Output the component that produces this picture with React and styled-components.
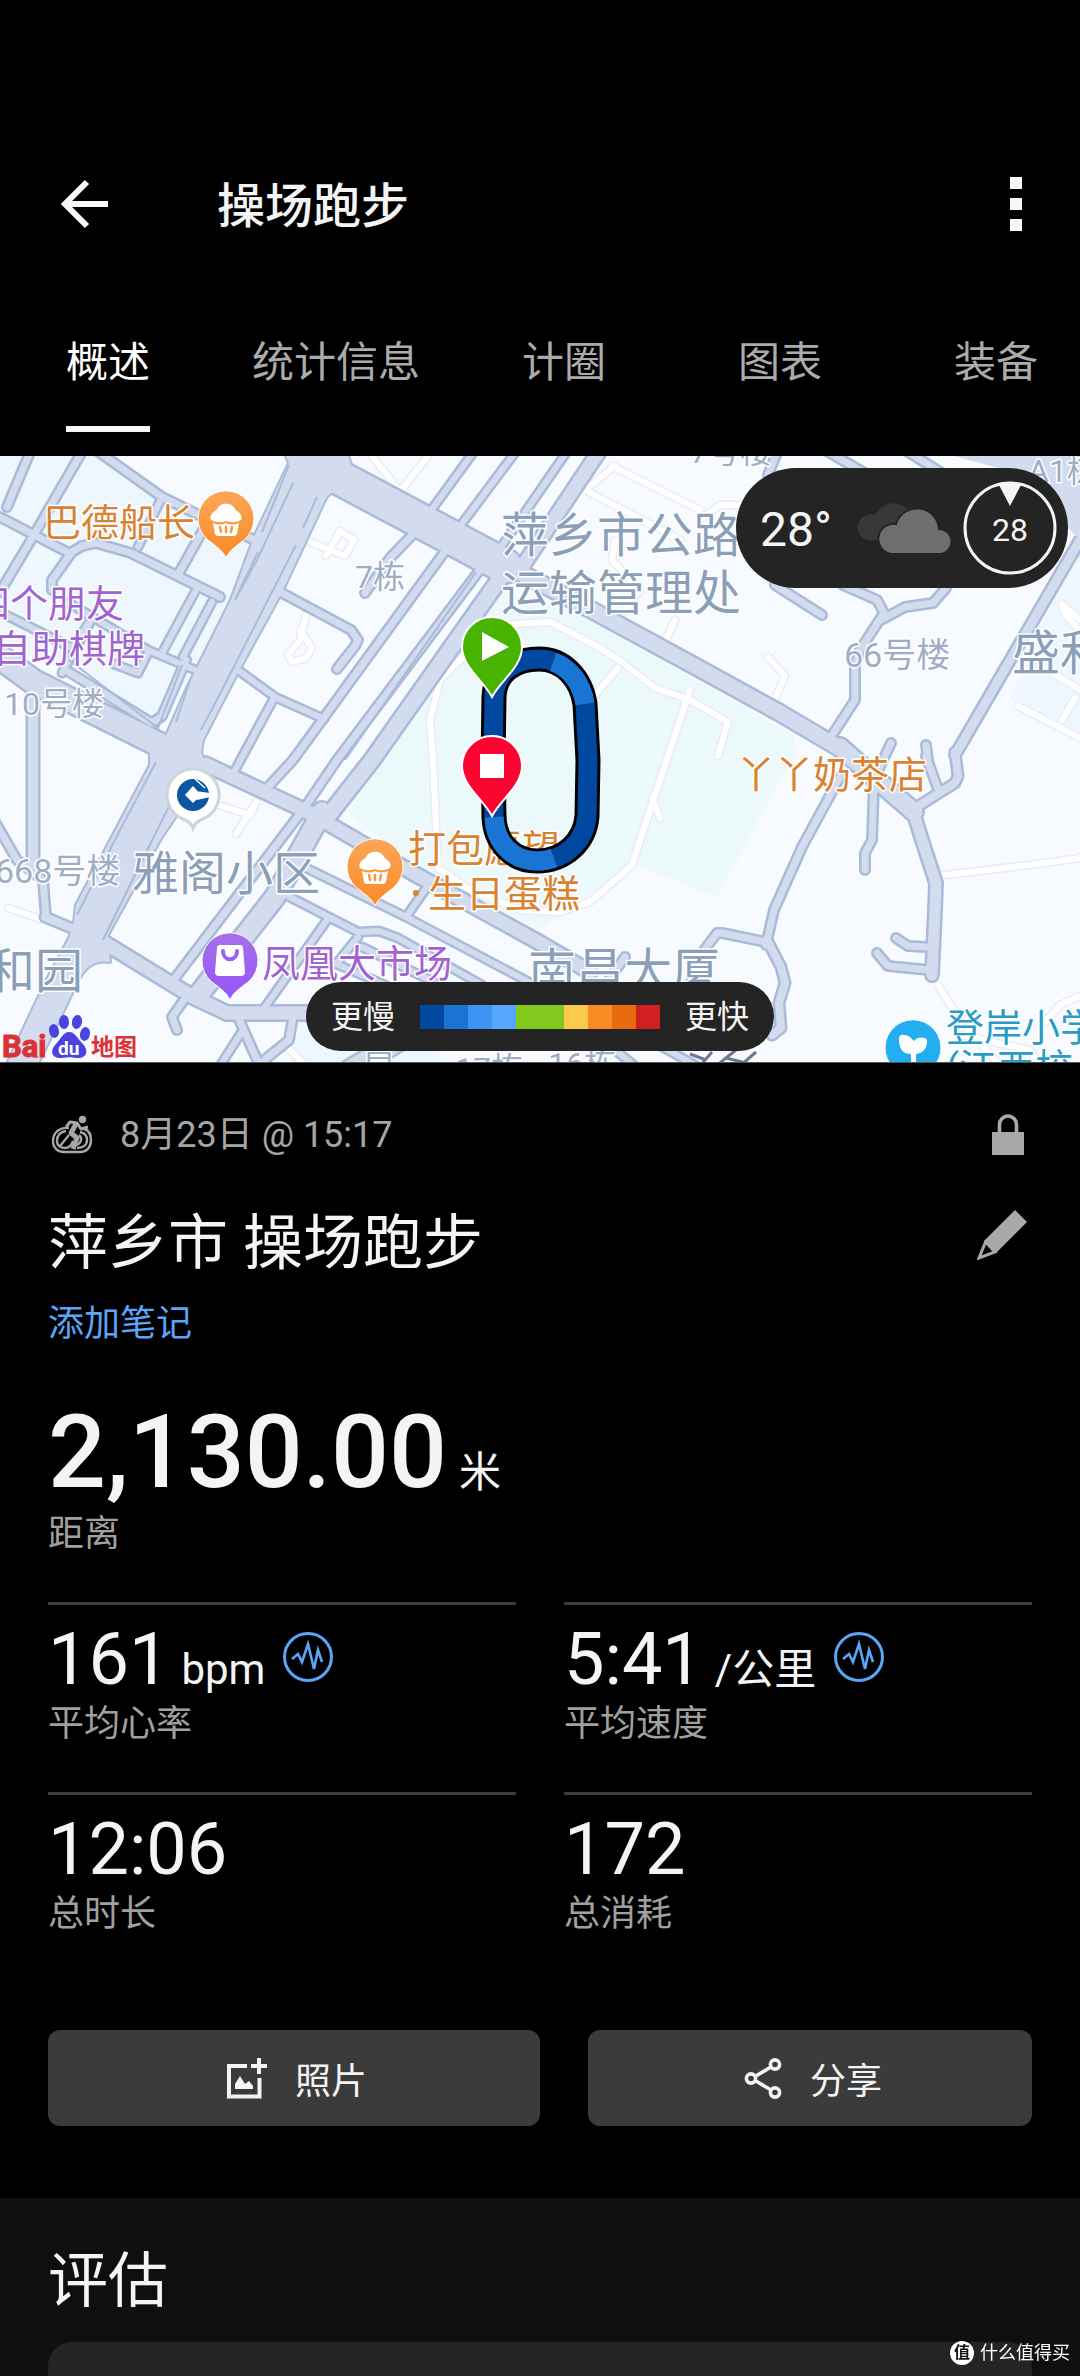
import React from "react";
import styled, { createGlobalStyle } from "styled-components";

const FONT = `Roboto, "Noto Sans CJK SC", sans-serif`;

const GlobalStyle = createGlobalStyle`
  * { box-sizing: border-box; }
  body { margin: 0; background: #000; font-family: ${FONT}; color: #f4f4f4; }
  button { font-family: inherit; border: 0; padding: 0; background: none; color: inherit; cursor: pointer; }
  h1, h2, p, dl, dd, dt { margin: 0; font-weight: 400; }
  svg { display: block; }
`;

const Page = styled.div`
  min-height: 100vh;
  display: flex;
  flex-direction: column;
  overflow: hidden;
`;

/* ---------- header ---------- */

const Toolbar = styled.header`
  display: flex;
  align-items: center;
  padding: 168px 46px 0 48px;
  height: 240px;
`;

const ToolbarTitle = styled.h1`
  flex: 1;
  padding: 6px 0 0 97px;
  font-size: 48px;
  line-height: 72px;
  font-weight: 500;
`;

const IconButton = styled.button`
  flex: none;
  width: ${(p) => p.$size}px;
  height: ${(p) => p.$size}px;
  display: flex;
  align-items: center;
  justify-content: center;
  color: ${(p) => p.$color || "#f8f8f8"};
`;

const Tabs = styled.nav`
  display: flex;
  height: 216px;
  padding: 48px 0 24px;
  overflow: hidden;
`;

const Tab = styled.button`
  flex: none;
  min-width: 216px;
  padding: 0 36px;
  display: flex;
  justify-content: center;
  font-size: 42px;
  line-height: 138px;
  color: ${(p) => (p.$active ? "#fff" : "#ababab")};

  span {
    height: 144px;
    padding-top: 6px;
    border-bottom: 6px solid ${(p) => (p.$active ? "#f8f8f8" : "transparent")};
  }
`;

/* ---------- map ---------- */

const MapPanel = styled.section`
  position: relative;
  width: 100%;
  aspect-ratio: 1080 / 607;
  overflow: hidden;
  background: #f7faff;
`;

const MapCanvas = styled.svg`
  width: 100%;
  height: 100%;
`;

const WeatherPill = styled.div`
  position: absolute;
  top: 12px;
  right: 12px;
  height: 120px;
  padding: 0 11px 0 24px;
  border-radius: 60px;
  background: #242424;
  display: flex;
  align-items: center;
  gap: 25px;
  font-size: 48px;
  line-height: 54px;
`;

const Temperature = styled.span`
  padding-top: 3px;
`;

const Sky = styled.div`
  display: flex;
  align-items: center;
  gap: 12px;
`;

const Legend = styled.div`
  position: absolute;
  bottom: 12px;
  left: 50%;
  transform: translateX(-50%);
  height: 69px;
  padding: 0 25px;
  border-radius: 35px;
  background: #242424;
  display: flex;
  align-items: center;
  gap: 25px;
  font-size: 32px;
  line-height: 48px;
  white-space: nowrap;
`;

const Scale = styled.div`
  display: flex;
`;

const Swatch = styled.i`
  width: 24px;
  height: 24px;
  background: ${(p) => p.$color};
`;

/* ---------- details ---------- */

const Details = styled.main`
  padding: 48px 48px 72px;
`;

const Row = styled.div`
  display: flex;
  align-items: ${(p) => p.$align || "center"};
  justify-content: space-between;
  margin-bottom: ${(p) => p.$after || 0}px;
`;

const DateLine = styled.p`
  display: flex;
  align-items: center;
  gap: 24px;
  font-size: 36px;
  line-height: 48px;
  color: #a6a6a6;
`;

const ActivityName = styled.h2`
  padding-top: 3px;
  font-size: 60px;
  line-height: 72px;
`;

const NoteLink = styled.a`
  display: block;
  width: max-content;
  margin-top: 20px;
  font-size: 36px;
  line-height: 48px;
  color: #5ba5f6;
  text-decoration: none;
`;

const Distance = styled.dl`
  display: flex;
  flex-direction: column-reverse;
  margin: 46px 0 44px;
`;

const Label = styled.dt`
  font-size: 36px;
  line-height: 48px;
  color: #a0a0a0;
`;

const Figure = styled.dd`
  display: flex;
  align-items: baseline;
  gap: 12px;
  font-size: ${(p) => (p.$large ? 102 : 72)}px;
  font-weight: ${(p) => (p.$large ? 500 : 400)};
  line-height: ${(p) => (p.$large ? 116 : 80)}px;
  height: ${(p) => (p.$large ? 116 : 80)}px;

  svg {
    align-self: flex-start;
    margin: 12px 0 0 6px;
  }
`;

const Unit = styled.span`
  font-size: 42px;
  font-weight: 400;
  line-height: 48px;
`;

const Stats = styled.dl`
  display: grid;
  grid-template-columns: 1fr 1fr;
  column-gap: 48px;
  row-gap: 44px;
`;

const Stat = styled.div`
  display: flex;
  flex-direction: column-reverse;
  padding-top: 15px;
  border-top: 3px solid #3d3d3d;
`;

const Actions = styled.div`
  display: grid;
  grid-template-columns: 41fr 37fr;
  gap: 48px;
  margin-top: 92px;
`;

const ActionButton = styled.button`
  height: 96px;
  padding-left: 6px;
  border-radius: 12px;
  background: #3b3b3b;
  display: flex;
  align-items: center;
  justify-content: center;
  gap: 28px;
  font-size: 36px;
`;

const Review = styled.section`
  flex: 1;
  display: flex;
  flex-direction: column;
  padding: 48px 48px 0;
  background: #0f0f0f;
`;

const ReviewTitle = styled.h2`
  font-size: 60px;
  line-height: 72px;
  margin-bottom: 24px;
`;

const ReviewCard = styled.div`
  flex: 1;
  min-height: 34px;
  border-radius: 24px 24px 0 0;
  background: #242424;
`;

const Watermark = styled.div`
  position: fixed;
  right: 10px;
  bottom: 11px;
  display: flex;
  align-items: center;
  gap: 6px;
  font-size: 18px;
  line-height: 24px;
  color: #fff;
`;

const WatermarkBadge = styled.span`
  width: 24px;
  height: 24px;
  border-radius: 50%;
  background: #fff;
  color: #111;
  font-size: 16px;
  font-weight: 700;
  text-align: center;
`;

/* ---------- map data ---------- */

// Each road: [width of the casing, points]
const ROADS = [
  [12, "31,450 7,507"],
  [12, "83,450 31,540 0,592"],
  [12, "96,450 162,497 203,517 257,541"],
  [11, "162,497 138,547"],
  [12, "0,517 69,553"],
  [12, "52,590 52,580 72,552 82,546 96,543 131,553 220,597"],
  [12, "207,523 179,573"],
  [11, "196,590 162,653"],
  [11, "212,602 183,657"],
  [11, "69,603 148,650 200,672"],
  [11, "0,612 72,648 93,617"],
  [11, "93,617 62,673"],
  [11, "148,653 138,673 114,664"],
  [12, "69,672 152,723 162,716 186,660"],
  [28, "-10,650 34,682 160,745"],
  [15, "33,690 33,865"],
  [12, "-6,820 17,860 43,880 46,917"],
  [13, "45,917 76,930"],
  [38, "325,470 400,510 505,566"],
  [20, "500,562 588,608 691,664 780,713 846,752"],
  [22, "840,747 876,779 914,812"],
  [16, "912,808 922,840 936,883 935,910 932,975"],
  [11, "475,450 430,512"],
  [11, "517,450 461,525"],
  [11, "568,450 499,550"],
  [18, "600,450 520,570"],
  [12, "417,530 390,558 365,593"],
  [12, "448,547 293,760 268,787"],
  [12, "482,567 337,760 303,810 172,982"],
  [20, "499,580 372,760 325,820"],
  [24, "322,812 275,897 200,993"],
  [12, "282,593 351,630 358,640 355,646 337,669"],
  [11, "238,670 275,697 324,719"],
  [11, "273,700 234,772"],
  [18, "205,764 310,813 413,873 540,943 590,972"],
  [11, "282,893 358,932 379,931 398,938 482,985"],
  [11, "296,863 406,917 540,988"],
  [11, "427,887 406,917"],
  [11, "327,920 265,1007"],
  [11, "358,937 337,963"],
  [11, "362,947 440,985"],
  [11, "334,963 385,985"],
  [18, "100,940 193,997 227,1013 320,1013"],
  [12, "186,997 172,1017 177,1030"],
  [12, "238,1017 258,1062"],
  [12, "293,1017 289,1040 262,1062"],
  [11, "241,1033 220,1066"],
  [12, "840,777 802,847 774,910 766,945"],
  [12, "688,990 702,953 717,933 722,933 766,942"],
  [13, "767,940 781,967 785,983 779,1003 781,1028 772,1035"],
  [12, "874,783 872,840 865,853 865,870"],
  [13, "912,810 939,793 955,783 958,776 955,752"],
  [14, "1080,540 955,755"],
  [12, "926,756 939,792"],
  [12, "926,745 928,760"],
  [12, "891,743 876,775"],
  [12, "896,938 908,946 926,947"],
  [12, "877,953 888,966 929,970"],
  [12, "778,450 768,475"],
  [12, "825,450 868,475"],
  [12, "905,450 945,475"],
  [12, "775,585 822,615"],
  [12, "843,585 877,600 884,613 860,650 855,666 855,700 829,740"],
  [12, "946,588 933,603 905,607 881,620"],
  [12, "625,957 610,978"],
  [24, "400,1040 350,1070"],
  [11, "590,1030 640,1070"],
  [11, "650,1040 700,1068"],
];

const LANES = [
  "293,483 257,560 235,600",
  "317,497 303,528",
  "289,465 262,532",
  "258,552 235,600",
  "296,545 222,690 201,730",
  "190,680 176,722",
  "156,762 120,830 77,915",
  "172,800 103,940",
  "69,660 158,728 182,665",
  "476,572 345,760",
];

// Footpaths drawn as white lines
const PATHS = [
  "372,456 400,492 428,456",
  "305,540 345,556 354,540 340,531 326,556",
  "306,615 300,640 288,655 292,662 306,658 312,648 300,630",
  "218,805 250,815 256,802 236,834",
  "433,760 430,720 440,680 465,655 500,625 550,622 595,645 622,662 655,688 690,700 728,722 718,756",
  "433,760 438,868 470,890 520,910 560,912 590,902 632,865 650,810 690,690",
  "652,798 660,818",
  "585,490 680,540",
  "612,466 700,510",
  "615,466 585,490",
  "615,540 612,560 640,590 618,620",
  "675,620 662,648",
  "618,668 595,695",
  "768,657 785,676 770,710",
  "700,520 720,505 740,505",
  "936,876 1030,865 1080,858",
  "938,985 960,1020 1000,1066",
  "1080,996 1060,1005 1045,1022",
  "1080,620 1062,604 1064,612 1080,632",
  "1018,706 1080,738",
  "8,908 40,919",
  "290,1050 310,1070",
  "960,1035 1030,1050 1040,1066",
  "1080,690 1040,665",
  "1062,720 1075,698",
];

const COLOR = { food: "#d9822f", shop: "#a064d0", area: "#8b9fb8", plain: "#9fadc6", school: "#2a9bc4" };

// [kind, size, x, baseline, text]
const LABELS = [
  ["plain", 32, 690, 463, "7号楼"],
  ["plain", 32, 1028, 482, "A1栋"],
  ["food", 38, 43, 536, "巴德船长"],
  ["plain", 32, 355, 588, "7栋"],
  ["shop", 38, -28, 617, "四个朋友"],
  ["shop", 38, -7, 662, "自助棋牌"],
  ["plain", 32, 4, 715, "10号楼"],
  ["plain", 34, -5, 883, "668号楼"],
  ["plain", 34, 844, 667, "66号楼"],
  ["area", 48, 501, 552, "萍乡市公路"],
  ["area", 48, 501, 610, "运输管理处"],
  ["area", 48, 1012, 670, "盛和"],
  ["food", 38, 737, 788, "丫丫奶茶店"],
  ["area", 47, 132, 890, "雅阁小区"],
  ["food", 38, 408, 862, "打包愿望"],
  ["food", 38, 428, 907, "生日蛋糕"],
  ["shop", 38, 262, 977, "凤凰大市场"],
  ["area", 48, -13, 988, "和园"],
  ["area", 48, 528, 988, "南昌大厦"],
  ["plain", 30, 364, 1062, "昌"],
  ["plain", 32, 455, 1080, "17栋"],
  ["plain", 32, 548, 1075, "16栋"],
  ["school", 38, 946, 1041, "登岸小学"],
  ["school", 38, 946, 1081, "(江西校"],
];

const SCALE_COLORS = ["#0048a0", "#1a74d4", "#3d94f4", "#58a8ff", "#82c91e", "#82c91e", "#fbca4d", "#fb8b24", "#e96b0f", "#d02022"];

const AVENUE =
  "M286,456 L289,463 L255,535 L231,600 L186,690 L165,738 L150,750 L150,765 L76,905 L74,922 L69,938 L45,983 L5,1068 L36,1068 L77,983 Q88,958 110,962 L108,935 L160,840 L207,770 L201,752 L203,740 L238,672 L282,592 L325,500 Q332,488 342,490 L352,468 L348,456 Z";

const TRACK =
  "M494,697 L493,760 L494,817 C495,842 512,861 537,861 C564,861 585,842 587,816 L588,760 L585,704 C581,678 563,659 539,659 C517,659 495,670 494,697 Z";

function Bubble({ x, y, fill, children }) {
  return (
    <g transform={`translate(${x} ${y})`}>
      <path
        d="M0,39 C-3,32 -8,29 -14,24 A28,28 0 1 1 14,24 C8,29 3,32 0,39 Z"
        fill={fill}
        stroke="#fff"
        strokeWidth="1"
      />
      {children}
    </g>
  );
}

function Cupcake() {
  return (
    <g fill="#fff">
      <path d="M-15,1 C-18,-5 -10,-8 -9,-10 C-6,-17 6,-17 9,-10 C10,-8 18,-5 15,1 Q8,5 0,2 Q-8,5 -15,1 Z" />
      <path d="M-13,4 Q-6,7 0,4 Q6,7 13,4 L11,15 Q10,17 8,17 L-8,17 Q-10,17 -11,15 Z" />
      <path d="M-6,8 L-5,13 M0,8 L0,13 M6,8 L5,13" stroke="#fb963c" strokeWidth="2.4" strokeLinecap="round" />
    </g>
  );
}

function RoutePin({ x, y, fill, children }) {
  return (
    <g transform={`translate(${x} ${y})`}>
      <path
        d="M0,50 C-8,34 -30,20 -30,0 A30,30 0 0 1 30,0 C30,20 8,34 0,50 Z"
        fill={fill}
        stroke="#fff"
        strokeWidth="2"
      />
      {children}
    </g>
  );
}

function RouteMap() {
  return (
    <MapCanvas viewBox="0 456 1080 607" preserveAspectRatio="xMidYMid slice" role="img" aria-label="路线地图">
      <rect x="0" y="456" width="1080" height="607" fill="#f7faff" />
      <path d="M0,456 L100,456 L255,540 L215,640 L160,720 L0,640 Z" fill="#eef6fe" />
      <path d="M1080,540 L1010,700 L1080,740 Z" fill="#eef6fe" />
      <path d="M300,1020 L440,1040 L440,1066 L290,1066 Z" fill="#edf7fd" />
      <path d="M500,592 L574,612 L793,735 L797,750 L717,897 L636,865 L575,907 L540,930 L427,873 L348,813 L382,760 Z" fill="#ecf9fb" />

      <g fill="none" strokeLinejoin="round" strokeLinecap="round">
        {PATHS.map((d) => <polyline key={d} points={d} stroke="#e9edf1" strokeWidth="9" />)}
        {PATHS.map((d) => <polyline key={d} points={d} stroke="#fff" strokeWidth="6" />)}
        {ROADS.map(([w, d]) => <polyline key={d} points={d} stroke="#a9bbd8" strokeWidth={w} />)}
        <path d={AVENUE} stroke="#a9bbd8" strokeWidth="4" />
        <path d="M955,456 L1080,456 L1080,540 L1060,520 L1040,480 Z" fill="#d2dcee" />
        {ROADS.map(([w, d]) => <polyline key={d} points={d} stroke="#d2dcee" strokeWidth={w - 5} />)}
      </g>
      <path d={AVENUE} fill="#d2dcee" />
      <g fill="none" stroke="#a9bbd8" strokeWidth="2">
        {LANES.map((d) => <polyline key={d} points={d} />)}
      </g>

      <g fontFamily={FONT} stroke="#fff" strokeWidth="3" strokeLinejoin="round" paintOrder="stroke">
        {LABELS.map(([kind, size, x, y, text]) => (
          <text key={text} x={x} y={y} fontSize={size} fill={COLOR[kind]}>
            {text}
          </text>
        ))}
      </g>
      <circle cx="416" cy="893" r="3" fill={COLOR.food} />
      <path d="M690,1054 L706,1060 M700,1066 L712,1052 M716,1066 L736,1050 M740,1066 L756,1052 M726,1058 L750,1064" stroke="#6f7890" strokeWidth="3" />

      <defs>
        <linearGradient id="food" x1="0" y1="0" x2="0" y2="1">
          <stop offset="0" stopColor="#fba658" />
          <stop offset="1" stopColor="#fb8a26" />
        </linearGradient>
        <linearGradient id="shop" x1="0" y1="0" x2="0" y2="1">
          <stop offset="0" stopColor="#a671ea" />
          <stop offset="1" stopColor="#9555fa" />
        </linearGradient>
      </defs>
      <Bubble x={226} y={519} fill="url(#food)"><Cupcake /></Bubble>
      <Bubble x={375} y={867} fill="url(#food)"><Cupcake /></Bubble>
      <Bubble x={230} y={961} fill="url(#shop)">
        <path d="M-10,-16 L10,-16 Q13,-16 13,-13 L15,11 Q15,15 11,15 L-11,15 Q-15,15 -15,11 L-13,-13 Q-13,-16 -10,-16 Z" fill="#fff" />
        <path d="M-7,-10 C-7,1 7,1 7,-10" fill="none" stroke="#9c60f2" strokeWidth="4" strokeLinecap="round" />
      </Bubble>
      <Bubble x={913} y={1048} fill="#23aef0">
        <path d="M-2,22 L-2,6 C-9,6 -14,2 -14,-9 Q-14,-14 -9,-13 C-4,-13 -1,-9 1,-7 C4,-11 8,-11 12,-10 Q15,-9 14,-5 C13,2 9,5 3,6 L3,22 Z" fill="#fff" />
      </Bubble>
      <g transform="translate(193 795)">
        <path d="M0,33 Q-2,27 -10,24 A26,26 0 1 1 10,24 Q2,27 0,33 Z" fill="#fff" stroke="#cfd4dc" strokeWidth="3" />
        <circle r="16" fill="#0b57a6" />
        <path d="M0,-9 L8,0 L0,8 L-8,0 Z M2,-4 L17,-2 L17,2 L4,5 Z" fill="#fff" />
        <path d="M2,-16 L12,-7" stroke="#fff" strokeWidth="1.4" />
      </g>

      <g fill="none" strokeLinejoin="round">
        <path d={TRACK} stroke="#000" strokeWidth="25" />
        <path d={TRACK} stroke="#0048a0" strokeWidth="19" />
        <path d="M553,662 C570,668 582,683 585,704" stroke="#1a74d4" strokeWidth="19" />
        <path d="M494,817 C495,842 512,861 537,861 Q546,861 554,858" stroke="#1a74d4" strokeWidth="19" />
      </g>
      <RoutePin x={492} y={766} fill="#fc0430">
        <rect x="-12" y="-12" width="24" height="24" fill="#fff" />
      </RoutePin>
      <RoutePin x={492} y={647} fill="#48b300">
        <path d="M-10,-15 L17,0 L-10,14 Z" fill="#fff" />
      </RoutePin>

      <g transform="translate(0 1000)" fontFamily={FONT} fontWeight="700">
        <text x="2" y="57" fontSize="31" fill="#dc3236" stroke="#dc3236" strokeWidth="1">Bai</text>
        <g fill="#4a43e0">
          <ellipse cx="54" cy="31" rx="5" ry="7" transform="rotate(-12 54 31)" />
          <ellipse cx="64" cy="22" rx="5" ry="7" />
          <ellipse cx="77" cy="22" rx="5" ry="7" transform="rotate(10 77 22)" />
          <ellipse cx="85" cy="34" rx="5" ry="7" transform="rotate(12 85 34)" />
          <path d="M69,32 C75,32 77,38 82,43 C90,51 86,59 77,58 C71,57 67,57 62,58 C52,59 49,51 56,44 C61,39 63,32 69,32 Z" />
        </g>
        <text x="58" y="55" fontSize="19" fill="#fff">du</text>
        <text x="91" y="55" fontSize="23" fill="#dc3236">地图</text>
      </g>
      <rect x="0" y="1062" width="1080" height="1" fill="#555" />
    </MapCanvas>
  );
}

/* ---------- icons ---------- */

const BackIcon = () => (
  <svg width="48" height="50" viewBox="0 0 48 50" fill="none" stroke="currentColor" strokeWidth="6">
    <path d="M27,3 L5,25 L27,47 M4,25 L48,25" />
  </svg>
);

const MoreIcon = () => (
  <svg width="12" height="54" fill="currentColor">
    <rect width="12" height="12" />
    <rect y="21" width="12" height="12" />
    <rect y="42" width="12" height="12" />
  </svg>
);

const CyclistIcon = () => (
  <svg width="48" height="40" viewBox="-4 0 48 40" fill="none" stroke="currentColor" strokeWidth="2.4" strokeLinejoin="round">
    <circle cx="30.500" cy="4.500" r="3.700" fill="currentColor" stroke="none" />
    <path d="M17,13 C7,12 1,18 1,26 C1,33 6,37 12,37 L28,37 C35,37 39,32 39,25 C39,19 36,15 32,14" />
    <path d="M14,16 C8,17 5,21 5,26 C5,31 9,33 13,33 C18,33 20,29 21,26 M8,31 L17,20 M28,17 C33,18 35,21 35,25 C35,30 31,33 25,33 M24,30 C29,29 31,23 27,20" />
    <path d="M14,12 L18,7 L25,8 L29,14 L36,12" strokeWidth="3" />
    <path d="M24,9 L19,18 L25,23 L21,34" strokeWidth="5" />
  </svg>
);

const LockIcon = () => (
  <svg width="32" height="42" viewBox="0 0 32 42">
    <path d="M7.500,19 V10.500 a8.500,8.500 0 0 1 17,0 V19" fill="none" stroke="currentColor" strokeWidth="3.600" />
    <rect y="18" width="32" height="23" fill="currentColor" />
  </svg>
);

const PencilIcon = () => (
  <svg width="50" height="50" viewBox="0 0 50 50">
    <path d="M38,0 L50,12 L19,43 L7,31 Z" fill="currentColor" />
    <path d="M8.500,32 L2,48 L18,42 Z" fill="none" stroke="currentColor" strokeWidth="3" />
  </svg>
);

const PulseIcon = () => (
  <svg width="50" height="50" viewBox="0 0 50 50" fill="none" stroke="#5ba5f6" strokeWidth="3" aria-hidden="true">
    <circle cx="25" cy="25" r="23.500" />
    <path d="M9,27 L15,22 L19,30 L25,12 L31,37 L35,18 L39,30" strokeWidth="2.600" />
  </svg>
);

const PhotoIcon = () => (
  <svg width="40" height="41" viewBox="0 0 40 41" fill="none" stroke="currentColor" strokeWidth="4">
    <path d="M20,8 H2 V38.500 H32.500 V20" />
    <path d="M32,0 V16 M24,8 H40" />
    <path d="M8,31 V26 L13,18 L18,26 L22,23 L26,28 V31 Z" fill="currentColor" stroke="none" />
  </svg>
);

const ShareIcon = () => (
  <svg width="38" height="41" viewBox="0 0 38 41" fill="none" stroke="currentColor" strokeWidth="3.600">
    <circle cx="31" cy="6.500" r="4.600" />
    <circle cx="31" cy="34.500" r="4.600" />
    <circle cx="7" cy="20.500" r="4.600" />
    <path d="M11,18.500 L27,9 M11,22.500 L27,32" />
  </svg>
);

const CloudIcon = () => (
  <svg width="94" height="54" viewBox="0 0 94 54">
    <path d="M16,39 A13,13 0 1 1 18,14 A20,20 0 0 1 52,10 L40,39 Z" fill="#383838" />
    <path
      d="M34,53 A15,15 0 1 1 39,23 A22,22 0 0 1 82,28 A12.500,12.500 0 0 1 82,53 Z"
      fill="#6e6e6e"
      stroke="#242424"
      strokeWidth="2"
    />
  </svg>
);

const CompassIcon = () => (
  <svg width="94" height="94" viewBox="0 0 94 94">
    <circle cx="47" cy="47" r="45" fill="none" stroke="#f4f4f4" strokeWidth="3" />
    <path d="M36,4 Q47,0 58,4 L47,25 Z" fill="#f4f4f4" />
    <text x="47" y="60" textAnchor="middle" fontFamily={FONT} fontSize="32" fill="#f4f4f4">28</text>
  </svg>
);

/* ---------- page ---------- */

const TABS = ["概述", "统计信息", "计圈", "图表", "装备"];

const STATS = [
  { label: "平均心率", value: "161", unit: "bpm", pulse: true },
  { label: "平均速度", value: "5:41", unit: "/公里", pulse: true },
  { label: "总时长", value: "12:06" },
  { label: "总消耗", value: "172" },
];

export default function App() {
  return (
    <Page>
      <GlobalStyle />
      <Toolbar>
        <IconButton $size={72} aria-label="返回"><BackIcon /></IconButton>
        <ToolbarTitle>操场跑步</ToolbarTitle>
        <IconButton $size={36} aria-label="更多"><MoreIcon /></IconButton>
      </Toolbar>
      <Tabs>
        {TABS.map((name, i) => (
          <Tab key={name} $active={i === 0}><span>{name}</span></Tab>
        ))}
      </Tabs>

      <MapPanel>
        <RouteMap />
        <WeatherPill>
          <Temperature>28°</Temperature>
          <Sky>
            <CloudIcon />
            <CompassIcon />
          </Sky>
        </WeatherPill>
        <Legend>
          <span>更慢</span>
          <Scale>{SCALE_COLORS.map((c, i) => <Swatch key={i} $color={c} />)}</Scale>
          <span>更快</span>
        </Legend>
      </MapPanel>

      <Details>
        <Row $after={46}>
          <DateLine><CyclistIcon />8月23日 @ 15:17</DateLine>
          <IconButton $size={48} $color="#a9a9a9" aria-label="隐私"><LockIcon /></IconButton>
        </Row>
        <Row $align="flex-start">
          <ActivityName>萍乡市 操场跑步</ActivityName>
          <IconButton $size={60} $color="#a9a9a9" aria-label="编辑"><PencilIcon /></IconButton>
        </Row>
        <NoteLink href="#note">添加笔记</NoteLink>

        <Distance>
          <Label>距离</Label>
          <Figure $large>2,130.00<Unit>米</Unit></Figure>
        </Distance>

        <Stats>
          {STATS.map((s) => (
            <Stat key={s.label}>
              <Label>{s.label}</Label>
              <Figure>
                {s.value}
                {s.unit && <Unit>{s.unit}</Unit>}
                {s.pulse && <PulseIcon />}
              </Figure>
            </Stat>
          ))}
        </Stats>

        <Actions>
          <ActionButton><PhotoIcon />照片</ActionButton>
          <ActionButton><ShareIcon />分享</ActionButton>
        </Actions>
      </Details>

      <Review>
        <ReviewTitle>评估</ReviewTitle>
        <ReviewCard />
      </Review>

      <Watermark>
        <WatermarkBadge>值</WatermarkBadge>
        什么值得买
      </Watermark>
    </Page>
  );
}
